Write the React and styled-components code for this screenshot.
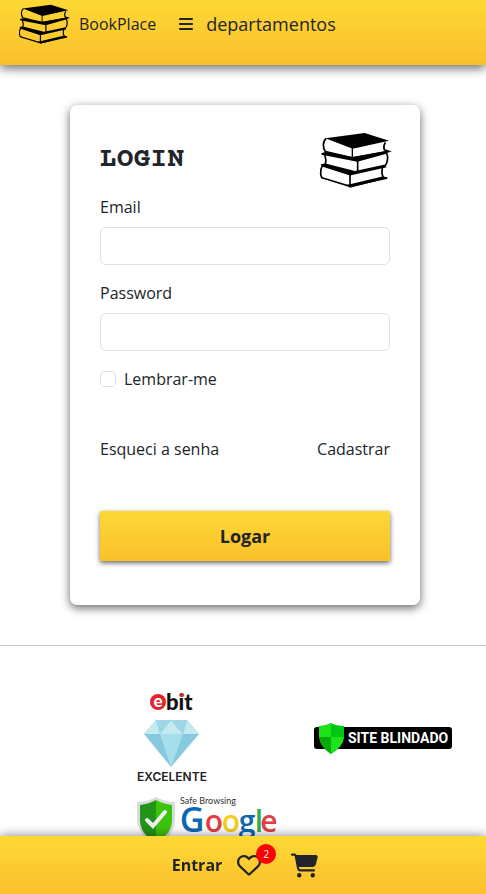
import React from "react";
import styled, { createGlobalStyle } from "styled-components";
import { FaBars, FaCartShopping, FaRegHeart } from "react-icons/fa6";

const GlobalStyle = createGlobalStyle`
  *, *::before, *::after { box-sizing: border-box; }
  body {
    margin: 0;
    background: #fff;
    color: #212529;
    font-family: "Open Sans", "Noto Sans", sans-serif;
    font-size: 16px;
    line-height: 24px;
  }
  a { color: inherit; text-decoration: none; }
  svg { display: block; flex: none; overflow: visible; }
`;

const gradient = "linear-gradient(#fdd835, #fbc02d)";

const Header = styled.header`
  display: flex;
  align-items: flex-start;
  height: 65px;
  padding: 0 19px;
  background: ${gradient};
  box-shadow: 0 3px 10px rgba(0, 0, 0, 0.6);
`;

const Brand = styled.a`
  display: flex;
  align-items: center;
  gap: 10px;
  height: 48px;
`;

const MenuButton = styled.button`
  display: flex;
  align-items: center;
  gap: 12px;
  height: 48px;
  margin-left: 22px;
  padding: 0;
  border: 0;
  background: none;
  color: inherit;
  font: inherit;
  font-size: 18px;
  cursor: pointer;
`;

const Main = styled.main`
  padding: 40px 16px 40px 20px;
`;

const Card = styled.form`
  width: 100%;
  max-width: 350px;
  margin: 0 auto;
  padding: 27px 30px 44px;
  border-radius: 7px;
  background: #fff;
  box-shadow: 0 3px 10px rgba(0, 0, 0, 0.6);
`;

const CardHead = styled.div`
  display: flex;
  align-items: center;
  justify-content: space-between;
  margin-bottom: 7px;
`;

const Title = styled.h1`
  margin: 0;
  font-family: "Courier Prime", "Courier", "Courier New", "Liberation Mono", monospace;
  font-size: 28px;
  line-height: 34px;
  font-weight: 700;
`;

const Field = styled.div`
  display: flex;
  flex-direction: column;
  gap: 8px;
  margin-bottom: 16px;
`;

const Input = styled.input`
  width: 100%;
  height: 38px;
  padding: 6px 12px;
  border: 1px solid #dee2e6;
  border-radius: 6px;
  background: #fff;
  color: inherit;
  font: inherit;
`;

const CheckLabel = styled.label`
  display: flex;
  align-items: center;
  gap: 8px;
`;

const Checkbox = styled.input`
  appearance: none;
  width: 16px;
  height: 16px;
  margin: 0;
  border: 1px solid #dee2e6;
  border-radius: 4px;
  &:checked { background: #fbc02d; }
`;

const Links = styled.nav`
  display: flex;
  justify-content: space-between;
  margin: 46px 0 50px;
`;

const Submit = styled.button`
  display: block;
  width: 100%;
  height: 50px;
  border: 0;
  border-radius: 1px;
  background: ${gradient};
  box-shadow: 0 2px 5px rgba(0, 0, 0, 0.6);
  color: inherit;
  font: inherit;
  font-size: 18px;
  font-weight: 700;
  cursor: pointer;
`;

const Footer = styled.footer`
  display: grid;
  grid-template-columns: auto auto;
  justify-content: space-between;
  align-items: center;
  row-gap: 12px;
  padding: 46px 33px 40px 136px;
  border-top: 1px solid #c8c9ca;
`;

const BottomBar = styled.nav`
  position: fixed;
  left: 0;
  right: 0;
  bottom: 0;
  display: flex;
  align-items: center;
  justify-content: center;
  height: 58px;
  padding-left: 4px;
  background: ${gradient};
  box-shadow: 0 0 10px rgba(0, 0, 0, 0.5);
`;

const Enter = styled.a`
  font-weight: 700;
`;

const IconLink = styled.a`
  position: relative;
  margin-left: ${(p) => p.$gap}px;
`;

const Badge = styled.span`
  position: absolute;
  top: -9px;
  right: -15px;
  width: 20px;
  height: 20px;
  border-radius: 50%;
  background: #f00;
  color: #fff;
  font-size: 10px;
  line-height: 20px;
  text-align: center;
`;

function Books({ width, height }) {
  return (
    <svg width={width} height={height} viewBox="60 110 210 167" preserveAspectRatio="none" aria-hidden="true">
      <path d="M76 129 194 113 267 136 158 160Z" />
      <path d="M79 129Q70 136 70 148T76 168L157 187 266 168 253 163Q249 152 256 141" fill="none" stroke="#000" strokeWidth="5" />
      <path d="M157 156V188" stroke="#000" strokeWidth="4" />
      <path d="M64 173 78 169 158 185 268 165 262 174 172 199 65 178Z" />
      <path d="M74 177Q80 192 76 207M173 196V228M258 172Q265 180 262 195T252 212" fill="none" stroke="#000" strokeWidth="5" />
      <path d="M62 206 76 204 165 226 252 208 260 215 150 240 66 213Z" />
      <path d="M67 211Q61 220 62 234T71 248L150 272 262 247M150 237V272M248 214Q243 230 249 244" fill="none" stroke="#000" strokeWidth="5" />
      <path d="M140 267 150 266 250 242 263 247 150 276Z" />
    </svg>
  );
}

function EbitSeal() {
  return (
    <svg width="72" height="92" viewBox="0 0 72 92" role="img" aria-label="ebit excelente">
      <circle cx="22" cy="10" r="8" fill="#e8202c" />
      <text x="22" y="15" textAnchor="middle" fontFamily="Lato" fontSize="17" fontWeight="900" fill="#fff">e</text>
      <text x="30" y="18" fontFamily="Lato" fontSize="22" fontWeight="900" fill="#111">bit</text>
      <circle cx="46" cy="3" r="2" fill="#e8202c" />
      <path d="M20 28H51L63 42 35 75 8 42Z" fill="#87cadf" />
      <path d="M20 28 8 42H24ZM51 28 47 42H63ZM35 28 24 42H47Z" fill="#c5e9f0" />
      <path d="M20 28H35L24 42ZM35 28H51L47 42Z" fill="#9bd7e5" />
      <path d="M24 42H47L35 75Z" fill="#a5dfeb" />
      <text x="36" y="89" textAnchor="middle" fontFamily="Inter" fontSize="12" fontWeight="600" fill="#222">EXCELENTE</text>
    </svg>
  );
}

function BlindadoSeal() {
  return (
    <svg width="140" height="32" viewBox="0 0 140 32" role="img" aria-label="Site Blindado">
      <rect x="1" y="5" width="138" height="22" rx="3" fill="#000" />
      <path d="M6 4Q13 4 18 1 23 4 31 4V14Q30 25 18 32 7 25 6 14Z" fill="#00c713" />
      <path d="M6 4Q13 4 18 1V15H6ZM18 15H31Q30 25 18 32Z" fill="#1de31b" />
      <path d="M6 15H18V32Q7 25 6 15Z" fill="#08a90a" />
      <text x="35" y="21" fontFamily="Roboto" fontSize="14" fontWeight="700" fill="#fff">SITE BLINDADO</text>
    </svg>
  );
}

const googleLetters = [
  { char: "G", x: 56, size: 34, color: "#0b68b4" },
  { char: "o", x: 78, size: 30, color: "#e13f43" },
  { char: "o", x: 95, size: 30, color: "#f7cd17" },
  { char: "g", x: 111, size: 30, color: "#0b68b4" },
  { char: "l", x: 123, size: 30, color: "#36a852" },
  { char: "e", x: 133, size: 30, color: "#e13f43" },
];

function GoogleSeal() {
  return (
    <svg width="142" height="52" viewBox="0 0 142 52" role="img" aria-label="Safe Browsing Google">
      <path d="M1 6Q12 6 20 1 29 6 39 6V25Q37 41 20 49 4 41 1 25Z" fill="#d9dcdc" />
      <path d="M4 9Q13 8 20 4V46Q5 39 4 25Z" fill="#219517" />
      <path d="M20 4Q27 8 36 9V25Q35 39 20 46Z" fill="#3cc30b" />
      <path d="M11 24 17 30 29 16" fill="none" stroke="#eee" strokeWidth="4" strokeLinecap="round" />
      <text x="44" y="8" fontFamily="Lato" fontSize="9" fill="#333">Safe Browsing</text>
      <text y="36" textAnchor="middle" fontFamily="Open Sans" fontWeight="600">
        {googleLetters.map((l) => (
          <tspan key={l.x} x={l.x} fontSize={l.size} fill={l.color}>{l.char}</tspan>
        ))}
      </text>
    </svg>
  );
}

export default function App() {
  return (
    <>
      <GlobalStyle />
      <Header>
        <Brand href="#">
          <Books width={50} height={40} />
          BookPlace
        </Brand>
        <MenuButton type="button">
          <FaBars size={16} />
          departamentos
        </MenuButton>
      </Header>
      <Main>
        <Card>
          <CardHead>
            <Title>LOGIN</Title>
            <Books width={70} height={56} />
          </CardHead>
          <Field>
            <label htmlFor="email">Email</label>
            <Input id="email" type="email" />
          </Field>
          <Field>
            <label htmlFor="password">Password</label>
            <Input id="password" type="password" />
          </Field>
          <CheckLabel>
            <Checkbox type="checkbox" />
            Lembrar-me
          </CheckLabel>
          <Links>
            <a href="#">Esqueci a senha</a>
            <a href="#">Cadastrar</a>
          </Links>
          <Submit type="submit">Logar</Submit>
        </Card>
      </Main>
      <Footer>
        <EbitSeal />
        <BlindadoSeal />
        <GoogleSeal />
      </Footer>
      <BottomBar>
        <Enter href="#">Entrar</Enter>
        <IconLink href="#" $gap={15} aria-label="Favoritos">
          <FaRegHeart size={24} />
          <Badge>2</Badge>
        </IconLink>
        <IconLink href="#" $gap={30} aria-label="Carrinho">
          <FaCartShopping size={27} />
        </IconLink>
      </BottomBar>
    </>
  );
}
